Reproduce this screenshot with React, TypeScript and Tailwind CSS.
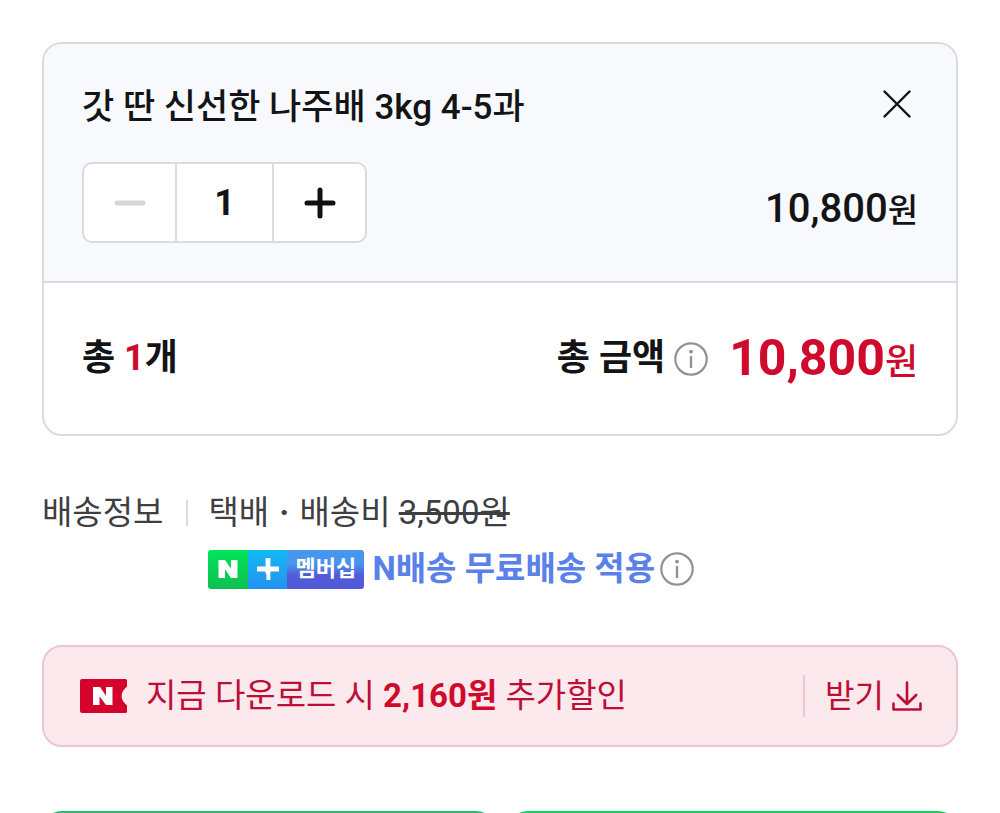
import { useState } from "react";

const UNIT_PRICE = 10800;

function InfoIcon() {
  return (
    <svg className="h-9 w-9" viewBox="0 0 36 36" fill="none" aria-hidden="true">
      <circle cx="18" cy="18" r="15.7" stroke="#929294" strokeWidth="2.2" />
      <circle cx="18" cy="10.6" r="1.9" fill="#929294" />
      <path d="M18 15v12" stroke="#929294" strokeWidth="2.4" />
    </svg>
  );
}

function MembershipBadge() {
  return (
    <span className="flex h-[39px] w-[156px] shrink-0 overflow-hidden rounded-[3px] text-white">
      <span className="flex w-10 items-center justify-center bg-linear-to-b from-[#03e45b] to-[#0bc050]">
        <svg className="h-5 w-5" viewBox="0 0 20 20" fill="currentColor" role="img" aria-label="네이버">
          <path d="M0.5 1H7l6 8.8V1h6.5v18H13L7 10.2V19H0.5z" />
        </svg>
      </span>
      <span className="flex w-[39px] items-center justify-center bg-linear-to-b from-[#12b9f3] to-[#2490f0]">
        <svg className="h-[22px] w-[22px]" viewBox="0 0 22 22" fill="currentColor" aria-hidden="true">
          <path d="M8.6 0h4.8v8.6H22v4.8h-8.6v8.6H9.500v-5l-1.500-3.600H0V8.6h8.6z" />
        </svg>
      </span>
      <span className="flex flex-1 items-center justify-center bg-linear-to-b from-[#4895ee] from-35% to-[#515bd8] to-65% text-[22px] font-bold leading-none">
        멤버십
      </span>
    </span>
  );
}

function CouponIcon() {
  return (
    <svg className="h-[34px] w-12 shrink-0" viewBox="0 0 48 34" aria-hidden="true">
      <path
        d="M2 0h43.500A1.500 1.500 0 0 1 47 1.500V7.500l-2 2c-4.500 4-4.500 11 0 15l2 2v6a1.500 1.500 0 0 1-1.500 1.500H2A2 2 0 0 1 0 32V2A2 2 0 0 1 2 0z"
        fill="#d5032b"
      />
      <path d="M13 8h7l6 8.800V8h6.500v18H26l-6.500-8.800V26H13z" fill="#fff" />
    </svg>
  );
}

export default function App() {
  const [quantity, setQuantity] = useState(1);
  const price = (UNIT_PRICE * quantity).toLocaleString("ko-KR");

  return (
    <main className="h-screen overflow-hidden bg-white px-[42px] pt-[42px] font-[Roboto,'Noto_Sans_CJK_KR',sans-serif] text-[#131416]">
      {/* Selected option */}
      <section className="overflow-hidden rounded-[20px] border-2 border-[#d9dcde]">
        <div className="border-b-2 border-[#d9dcde] bg-[#f7f9fd] px-[38px] pb-[38px] pt-10">
          <div className="flex items-start justify-between">
            <h2 className="text-[35px] font-medium leading-[48px]">갓 딴 신선한 나주배 3kg 4-5과</h2>
            <button type="button" aria-label="삭제" className="flex h-10 w-[42px] items-center justify-center">
              <svg className="h-7 w-7" viewBox="0 0 28 28" fill="none" stroke="#111" strokeWidth="2.4" strokeLinecap="round">
                <path d="M1.500 1.500l25 25M26.500 1.500l-25 25" />
              </svg>
            </button>
          </div>

          <div className="mt-[30px] flex items-center justify-between">
            <div className="flex h-[81px] w-[285px] overflow-hidden rounded-[10px] border-2 border-[#d9dcde] bg-white">
              <button
                type="button"
                aria-label="수량 빼기"
                disabled={quantity === 1}
                onClick={() => setQuantity(quantity - 1)}
                className="flex flex-1 items-center justify-center text-[#111] disabled:text-[#d5d6d8]"
              >
                <svg className="h-8 w-8" viewBox="0 0 32 32" fill="none" stroke="currentColor" strokeWidth="5" strokeLinecap="round">
                  <path d="M3 16h26" />
                </svg>
              </button>
              <input
                type="text"
                inputMode="numeric"
                aria-label="수량"
                value={quantity}
                onChange={(e) => setQuantity(Math.max(1, Number(e.target.value) || 1))}
                className="w-[99px] border-x-2 border-[#d9dcde] text-center text-[36px] font-bold outline-none"
              />
              <button
                type="button"
                aria-label="수량 더하기"
                onClick={() => setQuantity(quantity + 1)}
                className="flex flex-1 items-center justify-center text-[#111]"
              >
                <svg className="h-8 w-8" viewBox="0 0 32 32" fill="none" stroke="currentColor" strokeWidth="5" strokeLinecap="round">
                  <path d="M3 16h26M16 3v26" />
                </svg>
              </button>
            </div>
            <p className="flex items-baseline pt-3 text-[40px] font-medium leading-[48px]">
              {price}
              <span className="text-[33px] leading-none">원</span>
            </p>
          </div>
        </div>

        {/* Total */}
        <div className="flex items-center justify-between px-[38px] py-12">
          <p className="text-[36px] font-bold leading-[55px]">
            총 <span className="text-[#cf0a2c]">{quantity}</span>개
          </p>
          <div className="flex items-center">
            <span className="text-[36px] font-bold leading-[55px]">총 금액</span>
            <button type="button" aria-label="총 금액 안내" className="ml-2">
              <InfoIcon />
            </button>
            <strong className="ml-5 flex items-baseline text-[50px] font-bold leading-[55px] text-[#cf0a2c]">
              {price}
              <span className="text-[36px] font-medium leading-none">원</span>
            </strong>
          </div>
        </div>
      </section>

      {/* Delivery */}
      <dl className="mt-[53px] flex text-[33px] leading-[48px] text-[#3e3f42]">
        <dt className="flex items-center self-start">
          배송정보
          <span className="ml-[23px] mr-5 h-[26px] w-0.5 bg-[#d9dcde]" />
        </dt>
        <dd>
          <p>
            택배 <span className="mx-0.5 font-bold">·</span> 배송비 <del>3,500원</del>
          </p>
          <div className="mt-2 flex items-center">
            <MembershipBadge />
            <span className="ml-2 font-bold text-[#5a80ea]">N배송 무료배송 적용</span>
            <button type="button" aria-label="N배송 안내" className="ml-1">
              <InfoIcon />
            </button>
          </div>
        </dd>
      </dl>

      {/* Coupon */}
      <section className="mt-[52px] flex h-[102px] items-center rounded-[20px] border-2 border-[#efc5cf] bg-[#fbe9ed] pl-9 pr-[34px] text-[33px] text-[#bd0f35]">
        <CouponIcon />
        <p className="ml-[18px] flex-1">
          지금 다운로드 시 <strong className="font-bold text-[#cf0a2c]">2,160원</strong> 추가할인
        </p>
        <span className="h-[42px] w-0.5 bg-[#efc5cf]" />
        <button type="button" className="ml-5 flex items-center gap-2 text-[32px]">
          받기
          <svg className="h-[30px] w-[30px]" viewBox="0 0 30 30" fill="none" stroke="currentColor" strokeWidth="2.6" strokeLinecap="round" strokeLinejoin="round" aria-hidden="true">
            <path d="M15 1.500v21M5.800 14l9.200 9 9.200-9M1.500 22.500v6h27v-6" />
          </svg>
        </button>
      </section>

      {/* Purchase buttons */}
      <div className="mt-16 flex gap-3">
        <button type="button" aria-label="장바구니" className="h-24 flex-1 rounded-[20px] border-2 border-[#2fb573] bg-white" />
        <button type="button" aria-label="구매하기" className="h-24 flex-1 rounded-[20px] bg-[#12d05c]" />
      </div>
    </main>
  );
}
